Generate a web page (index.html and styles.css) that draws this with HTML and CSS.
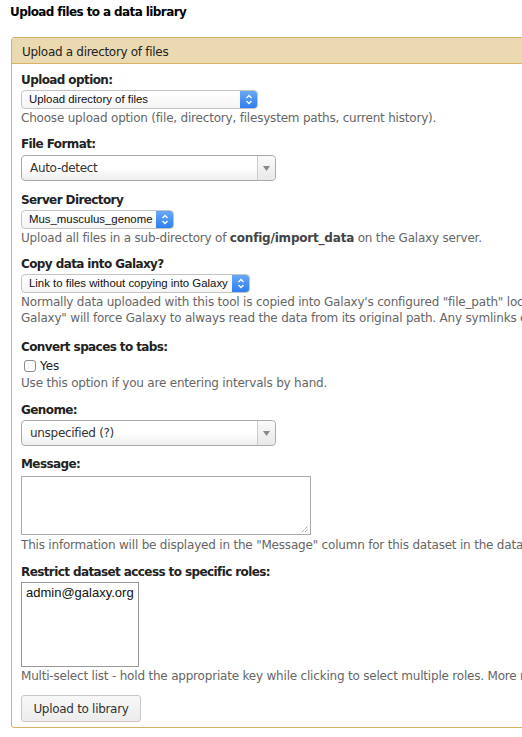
FILE: index.html
```html
<!DOCTYPE html>
<html>
<head>
<meta charset="utf-8">
<link rel="stylesheet" href="styles.css">
</head>
<body>
<h1 class="page-title">Upload files to a data library</h1>
<div class="panel">
  <div class="panel-title">Upload a directory of files</div>
  <div class="panel-body">
    <div class="row">
      <div class="label">Upload option:</div>
      <div class="native-select w-upload">
        <span class="ns-text">Upload directory of files</span>
        <span class="ns-arrow"><svg width="8" height="11" viewBox="0 0 8 11"><path d="M1.5 4 L4 1.5 L6.5 4 M1.5 7 L4 9.5 L6.5 7" fill="none" stroke="#fff" stroke-width="1.3"/></svg></span>
      </div>
      <div class="help">Choose upload option (file, directory, filesystem paths, current history).</div>
    </div>
    <div class="row row-format">
      <div class="label">File Format:</div>
      <div class="s2">
        <span class="s2-text">Auto-detect</span>
        <span class="s2-arrow"><svg width="7" height="5" viewBox="0 0 7 5"><path d="M0 0 H7 L3.5 5 Z" fill="#888"/></svg></span>
      </div>
    </div>
    <div class="row">
      <div class="label">Server Directory</div>
      <div class="native-select w-dir">
        <span class="ns-text">Mus_musculus_genome</span>
        <span class="ns-arrow"><svg width="8" height="11" viewBox="0 0 8 11"><path d="M1.5 4 L4 1.5 L6.5 4 M1.5 7 L4 9.5 L6.5 7" fill="none" stroke="#fff" stroke-width="1.3"/></svg></span>
      </div>
      <div class="help">Upload all files in a sub-directory of <b>config/import_data</b> on the Galaxy server.</div>
    </div>
    <div class="row row-copy">
      <div class="label">Copy data into Galaxy?</div>
      <div class="native-select w-copy">
        <span class="ns-text">Link to files without copying into Galaxy</span>
        <span class="ns-arrow"><svg width="8" height="11" viewBox="0 0 8 11"><path d="M1.5 4 L4 1.5 L6.5 4 M1.5 7 L4 9.5 L6.5 7" fill="none" stroke="#fff" stroke-width="1.3"/></svg></span>
      </div>
      <div class="help nowrap">Normally data uploaded with this tool is copied into Galaxy's configured "file_path" location where Galaxy<br>Galaxy" will force Galaxy to always read the data from its original path. Any symlinks encountered</div>
    </div>
    <div class="row row-check">
      <div class="label">Convert spaces to tabs:</div>
      <label class="check"><span class="box"></span><span>Yes</span></label>
      <div class="help">Use this option if you are entering intervals by hand.</div>
    </div>
    <div class="row">
      <div class="label">Genome:</div>
      <div class="s2">
        <span class="s2-text">unspecified (?)</span>
        <span class="s2-arrow"><svg width="7" height="5" viewBox="0 0 7 5"><path d="M0 0 H7 L3.5 5 Z" fill="#888"/></svg></span>
      </div>
    </div>
    <div class="row row-msg">
      <div class="label">Message:</div>
      <div class="textarea"><svg class="grip" width="8" height="8" viewBox="0 0 8 8"><path d="M1 7 L7 1 M4 7 L7 4" stroke="#777" stroke-width="1" stroke-dasharray="1 1"/></svg></div>
      <div class="help help-ta nowrap">This information will be displayed in the "Message" column for this dataset in the data library.</div>
    </div>
    <div class="row">
      <div class="label">Restrict dataset access to specific roles:</div>
      <div class="multi"><div class="opt">admin@galaxy.org</div></div>
      <div class="help nowrap">Multi-select list - hold the appropriate key while clicking to select multiple roles. More restrictions can be applied</div>
    </div>
    <div class="row last">
      <button class="btn">Upload to library</button>
    </div>
  </div>
</div>
</body>
</html>
```
FILE: styles.css
```css
html { overflow: hidden; }
body {
  margin: 0;
  padding: 4px 10px 0 10px;
  font-family: "DejaVu Sans", Verdana, sans-serif;
  font-size: 12px;
  color: #222;
  background: #fff;
  width: 700px;
}
.page-title {
  margin: 0;
  font-size: 12px;
  font-weight: bold;
  line-height: 16px;
  color: #000;
  letter-spacing: -0.6px;
}
.panel {
  margin-top: 17px;
  border: 1px solid #d8b365;
  border-radius: 3px;
  margin-left: 1px;
}
.panel-title {
  background: #ebd9b2;
  border-bottom: 1px solid #d8b365;
  height: 22px;
  line-height: 22px;
  padding: 3px 10px 0 10px;
  font-size: 12px;
  letter-spacing: -0.3px;
  color: #222;
}
.panel-body {
  padding: 9px 9px 5px 9px;
}
.row { margin-bottom: 11px; }
.row.last { margin-bottom: 0; }
.row-format { margin-bottom: 12px; }
.row-format .s2 { margin-top: 3px; }
.row-copy { margin-bottom: 14px; }
.row-check { margin-bottom: 12px; }
.row-msg { margin-bottom: 12px; }
.label {
  font-weight: bold;
  line-height: 15px;
  margin-bottom: 2px;
  letter-spacing: -0.6px;
}
.help {
  color: #666;
  line-height: 16px;
  letter-spacing: -0.2px;
  margin-top: 1px;
}
.help-ta { margin-top: 2px; }
.nowrap { white-space: nowrap; }
.help b { color: #444; }

.native-select {
  display: flex;
  height: 19px;
  box-sizing: border-box;
  border: 1px solid #c4c4c4;
  border-radius: 4px;
  background: linear-gradient(#fff, #f5f5f5);
  font-family: "Liberation Sans", Arial, sans-serif;
  font-size: 11.4px;
  overflow: hidden;
}
.ns-text { flex: 1; padding-left: 7px; line-height: 17px; color: #111; }
.ns-arrow {
  width: 17px;
  background: linear-gradient(#6aa8f7, #2f7ef0);
  display: flex;
  align-items: center;
  justify-content: center;
}
.w-upload { width: 237px; }
.w-dir { width: 153px; }
.w-copy { width: 229px; margin-top: 2px; }

.s2 {
  display: flex;
  width: 255px;
  height: 26px;
  box-sizing: border-box;
  border: 1px solid #aaa;
  border-radius: 4px;
  background: linear-gradient(#fff 50%, #eee);
  margin-top: 2px;
}
.s2-text { flex: 1; padding-left: 8px; line-height: 24px; color: #333; letter-spacing: -0.3px; }
.s2-arrow {
  width: 17px;
  border-left: 1px solid #ccc;
  background: linear-gradient(#fafafa, #e8e8e8);
  border-radius: 0 4px 4px 0;
  display: flex;
  align-items: center;
  justify-content: center;
}

.check { display: flex; align-items: center; height: 17px; margin-left: 3px; margin-top: 1px; }
.box {
  width: 10px; height: 10px;
  border: 1px solid #8a8a8a;
  border-radius: 3px;
  background: #fff;
  margin-right: 4px;
}

.textarea {
  position: relative;
  width: 290px;
  height: 59px;
  box-sizing: border-box;
  border: 1px solid #a9a9a9;
  margin-top: 4px;
  background: #fff;
}
.grip { position: absolute; right: 1px; bottom: 1px; }

.multi {
  width: 118px;
  height: 85px;
  box-sizing: border-box;
  border: 1px solid #999;
  background: #fff;
  margin-top: 2px;
}
.opt {
  font-family: "Liberation Sans", Arial, sans-serif;
  font-size: 13px;
  padding: 2px 4px;
  color: #111;
}

.btn {
  display: block;
  width: 120px;
  height: 27px;
  font-family: "DejaVu Sans", Verdana, sans-serif;
  font-size: 12px;
  letter-spacing: -0.3px;
  color: #333;
  border: 1px solid #c8c8c8;
  border-radius: 3px;
  background: linear-gradient(#f8f8f8, #ececec);
  padding: 0;
}
```
